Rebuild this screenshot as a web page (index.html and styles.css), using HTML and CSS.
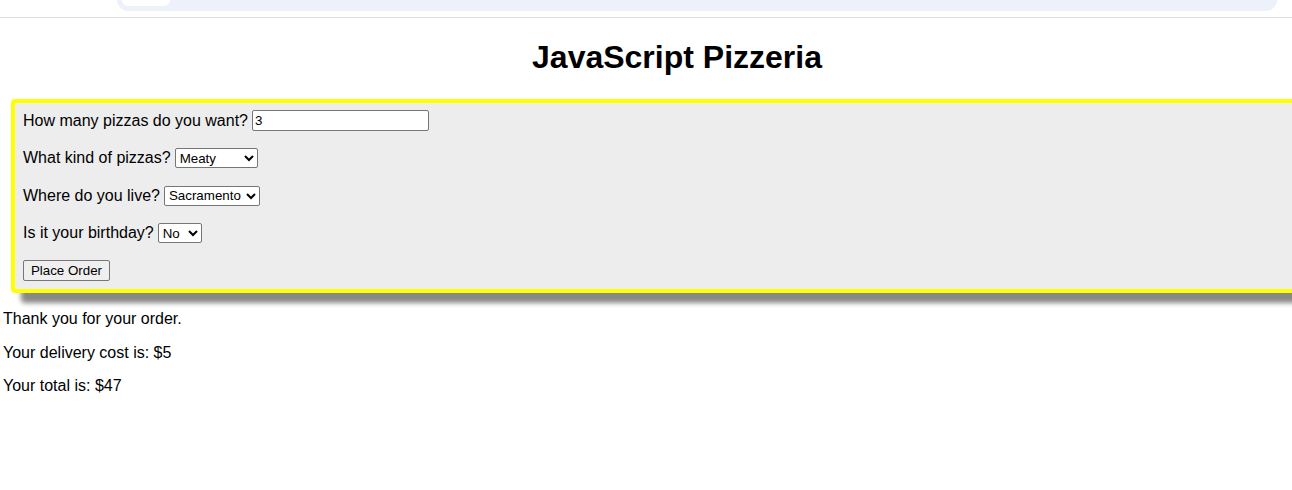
FILE: index.html
```html
<!DOCTYPE html>
<html>
<head>
<meta charset="utf-8">
<title>JavaScript Pizzeria</title>
<link rel="stylesheet" href="styles.css">
</head>
<body>
<div class="chrome">
  <div class="omnibox"><div class="pill"></div></div>
</div>
<div class="page">
  <h1 class="title">JavaScript Pizzeria</h1>
  <form class="order">
    <div class="row"><label>How many pizzas do you want?</label> <input class="qty" type="text" value="3"></div>
    <div class="row"><label>What kind of pizzas?</label> <select class="sel sel-kind"><option>Meaty</option><option>Veggie</option><option>Cheese</option></select></div>
    <div class="row"><label>Where do you live?</label> <select class="sel sel-city"><option>Sacramento</option><option>Davis</option><option>Roseville</option></select></div>
    <div class="row"><label>Is it your birthday?</label> <select class="sel sel-bday"><option>No</option><option>Yes</option></select></div>
    <div class="row"><button class="btn" type="button">Place Order</button></div>
  </form>
  <p class="msg">Thank you for your order.</p>
  <p class="msg">Your delivery cost is: $5</p>
  <p class="msg">Your total is: $47</p>
</div>
</body>
</html>
```
FILE: styles.css
```css
html, body {
  margin: 0;
  padding: 0;
  overflow: hidden;
  background: #fff;
}
body {
  font-family: "Liberation Sans", Arial, sans-serif;
  font-size: 16px;
  color: #000;
}
.chrome {
  height: 17px;
  border-bottom: 1px solid #dadce0;
  background: #fff;
}
.omnibox {
  margin-left: 117px;
  width: 1160px;
  height: 11px;
  background: #edf2fa;
  border-radius: 0 0 12px 12px;
  position: relative;
}
.pill {
  position: absolute;
  left: 5px;
  top: 0;
  width: 48px;
  height: 6px;
  background: #fff;
  border-radius: 0 0 8px 8px;
}
.page {
  width: 1348px;
  padding-left: 3px;
}
.title {
  margin: 21px 0 23px;
  font-size: 32px;
  line-height: 37px;
  font-weight: bold;
  text-align: center;
}
.order {
  margin: 0 0 17px 8px;
  width: 1400px;
  border: 4px solid #ffff00;
  border-radius: 4px;
  background: #ededed;
  box-shadow: 10px 10px 5px #888;
  padding: 7px 8px 8px;
  display: flex;
  flex-direction: column;
  gap: 16.5px;
}
.row {
  height: 21px;
  display: flex;
  align-items: center;
  gap: 4px;
  line-height: 18px;
}
.qty {
  box-sizing: border-box;
  width: 177px;
  height: 21px;
  margin: 0;
  padding: 1px 2px;
  border: 1px solid #767676;
  border-radius: 2px;
  font-family: "Liberation Sans", Arial, sans-serif;
  font-size: 13.33px;
  background: #fff;
  color: #000;
}
.sel {
  box-sizing: border-box;
  height: 20px;
  margin: 0;
  font-family: "Liberation Sans", Arial, sans-serif;
  font-size: 13.33px;
  border: 1px solid #767676;
  border-radius: 2px;
  background-color: #fff;
  color: #000;
}
.sel-kind { width: 83px; }
.sel-city { width: 96px; }
.sel-bday { width: 44px; }
.btn {
  box-sizing: border-box;
  height: 21px;
  width: 87px;
  margin: 0;
  padding: 1px 6px;
  font-family: "Liberation Sans", Arial, sans-serif;
  font-size: 13.33px;
  color: #000;
  background: #efefef;
  border: 1px solid #767676;
  border-radius: 2px;
}
.msg {
  margin: 0 0 15.5px;
  line-height: 18px;
}
```
